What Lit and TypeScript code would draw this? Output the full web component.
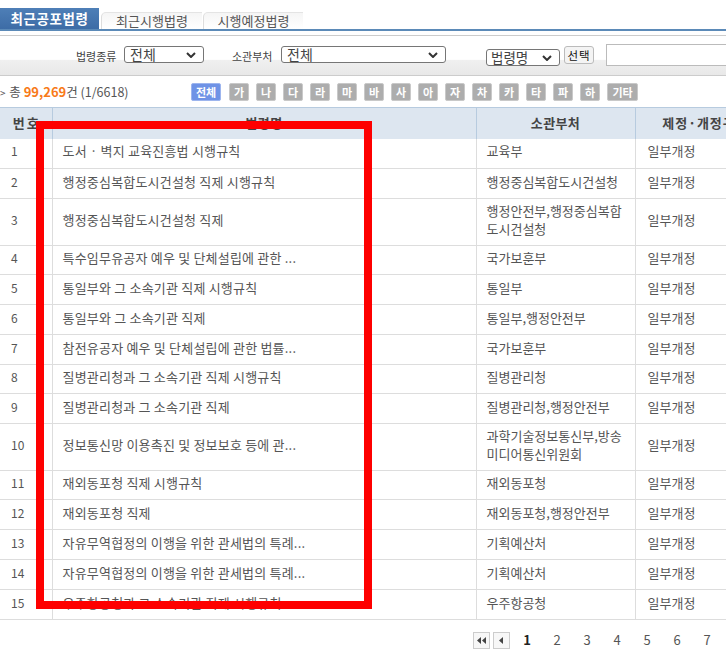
import { LitElement, html, css } from "lit";
import { customElement } from "lit/decorators.js";

const rows: [string, string, string, string][] = [
  ["1", "도서 · 벽지 교육진흥법 시행규칙", "교육부", "r30"],
  ["2", "행정중심복합도시건설청 직제 시행규칙", "행정중심복합도시건설청", "r30"],
  ["3", "행정중심복합도시건설청 직제", "행정안전부,행정중심복합\n도시건설청", "r47"],
  ["4", "특수임무유공자 예우 및 단체설립에 관한 ...", "국가보훈부", "r29"],
  ["5", "통일부와 그 소속기관 직제 시행규칙", "통일부", "r30"],
  ["6", "통일부와 그 소속기관 직제", "통일부,행정안전부", "r30"],
  ["7", "참전유공자 예우 및 단체설립에 관한 법률...", "국가보훈부", "r30"],
  ["8", "질병관리청과 그 소속기관 직제 시행규칙", "질병관리청", "r29"],
  ["9", "질병관리청과 그 소속기관 직제", "질병관리청,행정안전부", "r30"],
  ["10", "정보통신망 이용촉진 및 정보보호 등에 관...", "과학기술정보통신부,방송\n미디어통신위원회", "r47"],
  ["11", "재외동포청 직제 시행규칙", "재외동포청", "r29"],
  ["12", "재외동포청 직제", "재외동포청,행정안전부", "r30"],
  ["13", "자유무역협정의 이행을 위한 관세법의 특례...", "기획예산처", "r30"],
  ["14", "자유무역협정의 이행을 위한 관세법의 특례...", "기획예산처", "r30"],
  ["15", "우주항공청과 그 소속기관 직제 시행규칙", "우주항공청", "r30"],
];

const letters = ["가", "나", "다", "라", "마", "바", "사", "아", "자", "차", "카", "타", "파", "하"];

const chevron = html`<svg class="chev" width="10" height="6" viewBox="0 0 10 6"><path d="M1 1l4 4 4-4" fill="none" stroke="#333" stroke-width="2" /></svg>`;

@customElement("app-root")
export class AppRoot extends LitElement {
  static styles = css`
    :host {
      display: block;
      position: relative;
      width: 726px;
      height: 651px;
      overflow: hidden;
      background: #fff;
      font-family: "Noto Sans CJK KR", "Noto Sans", sans-serif;
      font-size: 13px;
      color: #555;
    }
    .tabs {
      display: flex;
      height: 21px;
      margin-top: 8px;
      align-items: flex-end;
    }
    .tab {
      flex: none;
      height: 17px;
      line-height: 15px;
      text-align: center;
      font-size: 13px;
      color: #555;
      background: linear-gradient(#f5f5f5, #fff);
      border-top: 1px solid #e4e4e4;
      border-left: 1px solid #ddd;
      border-top-left-radius: 5px;
      box-sizing: border-box;
    }
    .tab.active {
      width: 99px;
      height: 21px;
      line-height: 20px;
      font-size: 13.500px;
      font-weight: 700;
      color: #fff;
      background: linear-gradient(#4e7fb7, #3d6ca6);
      border: none;
      border-radius: 0;
      letter-spacing: 0.6px;
    }
    .tab.second { width: 101px; margin-left: 2px; }
    .tab.third { width: 100px; margin-left: 1px; }
    .blue-line { height: 2px; background: #5b8ab8; }
    .search {
      display: flex;
      align-items: flex-start;
      height: 41px;
      margin-top: 4px;
      box-sizing: border-box;
      border-top: 1px solid #ccc;
      border-bottom: 1px solid #ccc;
      background: linear-gradient(#fff 0, #fff 60%, #f0f0f0 62%, #e8e8e8 100%);
      font-size: 11px;
      color: #444;
    }
    .lbl { flex: none; line-height: 16px; margin-top: 12px; white-space: nowrap; }
    .lbl.l1 { margin-left: 76px; width: 48px; }
    .lbl.l2 { margin-left: 28px; width: 49px; }
    .sel {
      flex: none;
      display: flex;
      align-items: center;
      justify-content: space-between;
      box-sizing: border-box;
      height: 17px;
      margin-top: 10px;
      padding: 0 7px 0 5px;
      font-size: 14px;
      line-height: 15px;
      color: #444;
      background: #fff;
      border: 1px solid #767676;
      border-radius: 3px;
    }
    .sel.s1 { width: 80px; }
    .sel.s2 { width: 165px; }
    .sel.s3 { width: 74px; margin: 13px 0 0 40px; padding-left: 4px; font-size: 13.500px; }
    .pick {
      flex: none;
      width: 30px;
      height: 18px;
      margin: 10px 0 0 4px;
      padding: 0;
      font-family: inherit;
      font-size: 11.500px;
      line-height: 14px;
      letter-spacing: 1px;
      color: #111;
      background: #f4f4f4;
      border: 1px solid #bbb;
      border-radius: 3px;
    }
    .q {
      width: 130px;
      flex: none;
      height: 22px;
      margin: 8px 0 0 12px;
      box-sizing: border-box;
      border: 1px solid #bbb;
      background: #fff;
    }
    .count-row {
      display: flex;
      align-items: center;
      height: 31px;
    }
    .count { flex: none; width: 191px; font-size: 12.500px; color: #555; white-space: nowrap; }
    .count .arr { font-size: 10px; margin-right: 1px; }
    .count b { color: #f87a18; font-size: 13px; }
    .idx { display: flex; gap: 7px; }
    .k {
      flex: none;
      width: 20px;
      height: 18px;
      line-height: 16px;
      text-align: center;
      font-size: 11px;
      font-weight: 700;
      color: #fff;
      background: #adadad;
      border: 1px solid #c9c9c9;
      border-radius: 2px;
      box-sizing: border-box;
    }
    .k.on { width: 30px; margin-right: 1px; background: #6f93e6; border-color: #9db5ee; }
    .k.etc { width: 31px; }
    table {
      border-collapse: collapse;
      table-layout: fixed;
      width: 776px;
    }
    col.c1 { width: 52px; }
    col.c2 { width: 424px; }
    col.c3 { width: 159px; }
    col.c4 { width: 141px; }
    th {
      height: 31px;
      padding: 0 0 1px;
      box-sizing: border-box;
      background: #dde6f0;
      border-top: 1px solid #b7cbdf;
      border-right: 1px solid #b7cbdf;
      font-size: 13px;
      font-weight: 700;
      color: #444;
      text-align: center;
      letter-spacing: 0.4px;
    }
    th.n { letter-spacing: 2px; padding-left: 2px; }
    th.t { letter-spacing: 1px; }
    td {
      padding: 0 0 4px 10px;
      box-sizing: border-box;
      border-bottom: 1px solid #ddd;
      border-right: 1px solid #ddd;
      font-size: 13px;
      line-height: 18px;
      color: #555;
      white-space: pre-line;
    }
    td.title { letter-spacing: 0.2px; }
    td.num { font-size: 12px; padding-left: 11px; }
    td.kind { padding-left: 12px; }
    tr.r29 td { height: 29px; }
    tr.r30 td { height: 30px; }
    tr.r47 td { height: 47px; }
    .pager {
      display: flex;
      align-items: center;
      height: 18px;
      margin-top: 11px;
      margin-left: 473px;
      font-size: 13px;
      color: #555;
    }
    .pg {
      flex: none;
      width: 17px;
      height: 17px;
      display: flex;
      align-items: center;
      justify-content: center;
      box-sizing: border-box;
      border: 1px solid #ccc;
      background: #f7f7f7;
      margin-right: 3px;
    }
    .nums { display: flex; margin-left: -1px; padding-bottom: 2px; }
    .nums span { width: 30px; text-align: center; }
    .nums span.cur { color: #222; font-weight: 700; }
    .mark {
      position: absolute;
      left: 36px;
      top: 121px;
      width: 336px;
      height: 488px;
      box-sizing: border-box;
      border: 8px solid #fe0000;
      pointer-events: none;
    }
  `;

  render() {
    return html`
      <div class="tabs">
        <div class="tab active">최근공포법령</div>
        <div class="tab second">최근시행법령</div>
        <div class="tab third">시행예정법령</div>
      </div>
      <div class="blue-line"></div>
      <div class="search">
        <span class="lbl l1">법령종류</span>
        <div class="sel s1"><span>전체</span>${chevron}</div>
        <span class="lbl l2">소관부처</span>
        <div class="sel s2"><span>전체</span>${chevron}</div>
        <div class="sel s3"><span>법령명</span>${chevron}</div>
        <button class="pick">선택</button>
        <div class="q"></div>
      </div>
      <div class="count-row">
        <div class="count"><span class="arr">&gt;</span> 총 <b>99,269</b>건 (1/6618)</div>
        <div class="idx">
          <div class="k on">전체</div>
          ${letters.map((l) => html`<div class="k">${l}</div>`)}
          <div class="k etc">기타</div>
        </div>
      </div>
      <table>
        <colgroup><col class="c1" /><col class="c2" /><col class="c3" /><col class="c4" /></colgroup>
        <thead>
          <tr><th class="n">번호</th><th>법령명</th><th>소관부처</th><th class="t">제정·개정구분</th></tr>
        </thead>
        <tbody>
          ${rows.map(
            (r) => html`<tr class=${r[3]}>
              <td class="num">${r[0]}</td>
              <td class="title">${r[1]}</td>
              <td>${r[2]}</td>
              <td class="kind">일부개정</td>
            </tr>`
          )}
        </tbody>
      </table>
      <div class="pager">
        <div class="pg">
          <svg width="9" height="7" viewBox="0 0 9 7"><path d="M4 0v7L0 3.500zM9 0v7L5 3.500z" fill="#444" /></svg>
        </div>
        <div class="pg">
          <svg width="5" height="7" viewBox="0 0 5 7"><path d="M4 0v7L0 3.500z" fill="#444" /></svg>
        </div>
        <div class="nums">
          <span class="cur">1</span><span>2</span><span>3</span><span>4</span><span>5</span><span>6</span><span>7</span>
        </div>
      </div>
      <div class="mark"></div>
    `;
  }
}
